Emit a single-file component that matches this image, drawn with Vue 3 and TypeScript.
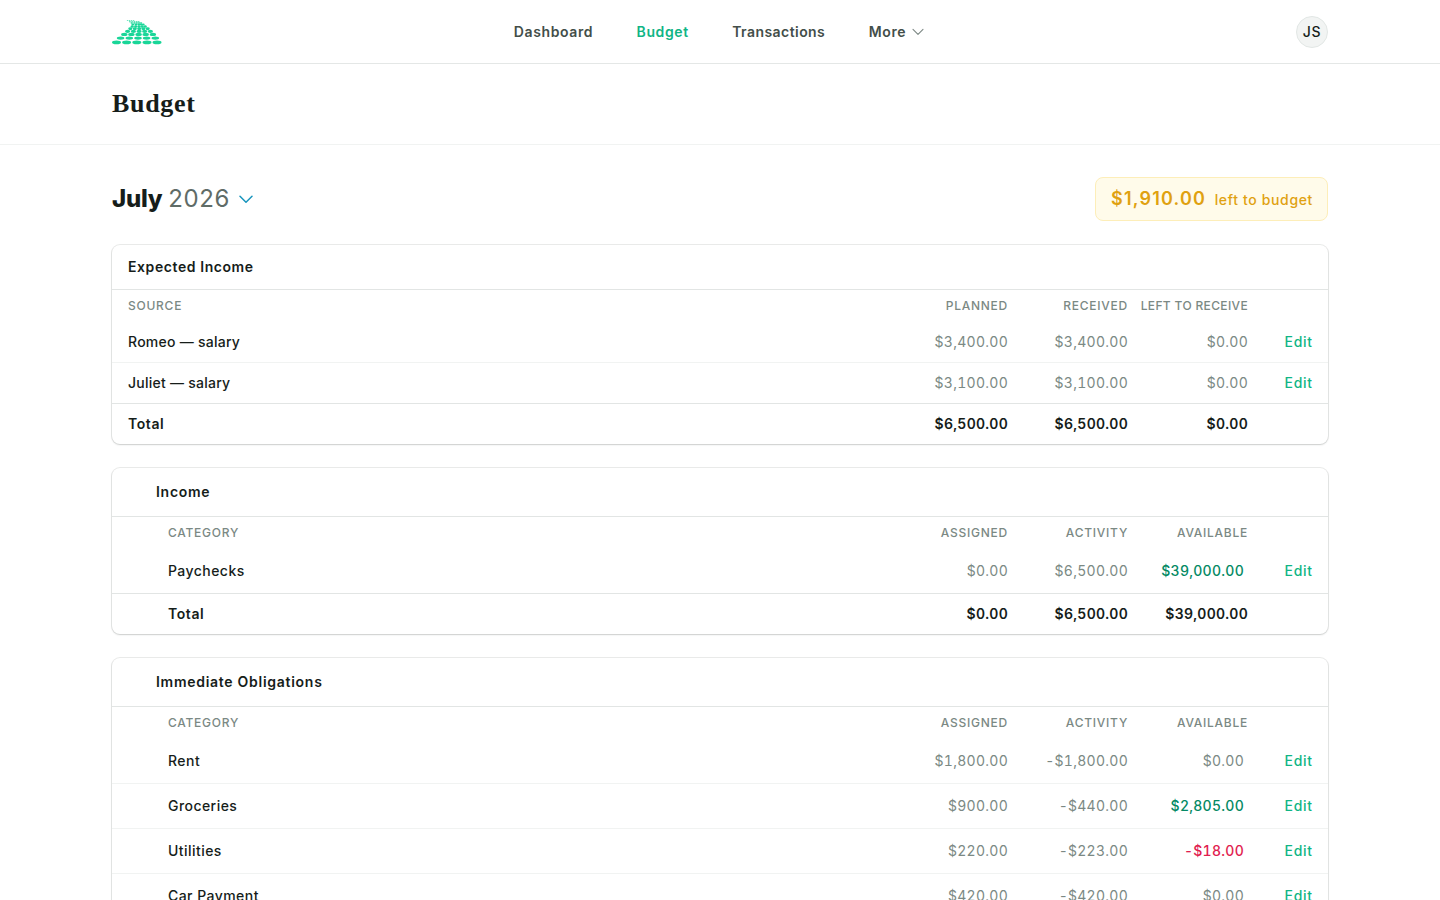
<script setup lang="ts">
interface Row {
  name: string
  values: string[]
  tone?: 'pos' | 'neg'
}
interface Group {
  title: string
  kind: 'income' | 'budget'
  columns: string[]
  rows: Row[]
  total?: string[]
}

const groups: Group[] = [
  {
    title: 'Expected Income',
    kind: 'income',
    columns: ['Source', 'Planned', 'Received', 'Left to receive'],
    rows: [
      { name: 'Romeo — salary', values: ['$3,400.00', '$3,400.00', '$0.00'] },
      { name: 'Juliet — salary', values: ['$3,100.00', '$3,100.00', '$0.00'] },
    ],
    total: ['$6,500.00', '$6,500.00', '$0.00'],
  },
  {
    title: 'Income',
    kind: 'budget',
    columns: ['Category', 'Assigned', 'Activity', 'Available'],
    rows: [{ name: 'Paychecks', values: ['$0.00', '$6,500.00', '$39,000.00'], tone: 'pos' }],
    total: ['$0.00', '$6,500.00', '$39,000.00'],
  },
  {
    title: 'Immediate Obligations',
    kind: 'budget',
    columns: ['Category', 'Assigned', 'Activity', 'Available'],
    rows: [
      { name: 'Rent', values: ['$1,800.00', '-$1,800.00', '$0.00'] },
      { name: 'Groceries', values: ['$900.00', '-$440.00', '$2,805.00'], tone: 'pos' },
      { name: 'Utilities', values: ['$220.00', '-$223.00', '-$18.00'], tone: 'neg' },
      { name: 'Car Payment', values: ['$420.00', '-$420.00', '$0.00'] },
    ],
  },
]

// Each logo row: vertical centre, ellipse radii, horizontal centres
const logoRows: { y: number; rx: number; ry: number; xs: number[] }[] = [
  { y: 22.4, rx: 4.5, ry: 1.8, xs: [4.5, 14.6, 24.8, 35, 45] },
  { y: 18.1, rx: 3.8, ry: 1.7, xs: [8.6, 17.3, 26, 34.6, 43.3] },
  { y: 14.4, rx: 3.2, ry: 1.7, xs: [12.3, 19.4, 26.6, 33.7, 40.9] },
  { y: 11.3, rx: 2.6, ry: 1.6, xs: [15.6, 21.4, 27.1, 32.7, 38.4] },
  { y: 8.7, rx: 2.05, ry: 1.45, xs: [18.3, 22.8, 27.2, 31.4, 35.7] },
  { y: 6.4, rx: 1.6, ry: 1.25, xs: [20.2, 23.7, 27, 30.1, 33.2] },
  { y: 4.5, rx: 1.4, ry: 1, xs: [20.8, 23.9, 26.7, 29.2, 31.3] },
  { y: 2.9, rx: 1.2, ry: 0.75, xs: [19.7, 22.4, 24.8, 27.1, 29.1] },
  { y: 1.7, rx: 1, ry: 0.55, xs: [17.9, 20.1, 22.4, 24.6, 26.6] },
  { y: 0.7, rx: 0.9, ry: 0.4, xs: [15.6, 17.6, 19.6, 21.6] },
]
</script>

<template>
  <div class="page">
    <nav class="nav">
      <div class="wrap nav-inner">
        <svg class="logo" width="50" height="25" viewBox="0 0 50 25" fill="#19d698">
          <template v-for="r in logoRows" :key="r.y">
            <ellipse v-for="x in r.xs" :key="x" :cx="x" :cy="r.y" :rx="r.rx" :ry="r.ry" />
          </template>
        </svg>
        <div class="links">
          <a class="l1">Dashboard</a>
          <a class="l2 active">Budget</a>
          <a class="l3">Transactions</a>
          <a class="l4">More</a>
          <svg width="12" height="8" viewBox="0 0 12 8" fill="none" stroke="#7d8985" stroke-width="1.1" stroke-linecap="round" stroke-linejoin="round"><path d="M1 1.3 6 6.3 11 1.3" /></svg>
        </div>
        <div class="avatar">JS</div>
      </div>
    </nav>

    <header class="head">
      <div class="wrap"><h1>Budget</h1></div>
    </header>

    <main class="wrap main">
      <div class="bar">
        <div class="month">
          <strong>July</strong><span>2026</span>
          <svg width="14" height="9" viewBox="0 0 14 9" fill="none" stroke="#1995bd" stroke-width="1.5" stroke-linecap="round" stroke-linejoin="round"><path d="M1 1.3 7 7.3 13 1.3" /></svg>
        </div>
        <div class="left"><b>$1,910.00</b><span>left to budget</span></div>
      </div>

      <section v-for="g in groups" :key="g.title" class="card" :class="[g.kind, { totalled: g.total }]">
        <h2>{{ g.title }}</h2>
        <div class="row cols">
          <span v-for="c in g.columns" :key="c" :class="{ tight: c.length > 10 }">{{ c }}</span>
        </div>
        <div v-for="r in g.rows" :key="r.name" class="row item">
          <span class="name">{{ r.name }}</span>
          <span v-for="(v, i) in r.values" :key="i" class="money" :class="i === 2 ? ['last', r.tone] : []">{{ v }}</span>
          <a class="edit">Edit</a>
        </div>
        <div v-if="g.total" class="row total">
          <span class="name">Total</span>
          <span v-for="(v, i) in g.total" :key="i" class="money">{{ v }}</span>
        </div>
      </section>
    </main>
  </div>
</template>

<style>
html, body { background: #fff; overflow: hidden; }
</style>

<style scoped>
* { box-sizing: border-box; }
.page {
  height: 100vh;
  overflow: hidden;
  font: 500 14px/20px Inter, "Liberation Sans", sans-serif;
  color: #161d1a;
}
.wrap { width: 1216px; margin: 0 auto; }
.nav { height: 64px; border-bottom: 1px solid #e4e7e6; }
.nav-inner {
  height: 63px;
  display: grid;
  grid-template-columns: 1fr auto 1fr;
  align-items: center;
}
.logo { display: block; margin-top: 1px; }
.links {
  display: flex;
  align-items: center;
  margin-right: 2px;
  font-weight: 600;
  color: #434e49;
}
.links a { margin-right: 43.5px; white-space: nowrap; letter-spacing: 0.6px; }
.links .active { color: #10b585; }
.links .l3 { letter-spacing: 0.44px; }
.links .l4 { margin-right: 6px; }
.avatar {
  justify-self: end;
  width: 32px;
  height: 32px;
  border-radius: 50%;
  border: 1px solid #e2e7e5;
  background: #f2f4f3;
  letter-spacing: 0.6px;
  line-height: 30px;
  text-align: center;
}
.head { height: 81px; border-bottom: 1px solid #f1f3f2; }
h1 {
  margin: 0;
  padding-top: 24px;
  font: 700 26px/32px "Liberation Serif", serif;
  letter-spacing: 0.7px;
}
.main { padding-top: 32px; }
.bar { display: flex; justify-content: space-between; align-items: center; height: 44px; margin-bottom: 24px; }
.month { display: flex; align-items: center; font-size: 24px; line-height: 32px; }
.month strong { font-weight: 800; margin-right: 6px; letter-spacing: -0.25px; }
.month span { font-weight: 400; color: #5f6c67; margin-right: 8.5px; letter-spacing: 0.6px; }
.left {
  width: 233px;
  height: 44px;
  padding: 0 14px 0 15px;
  display: flex;
  align-items: center;
  justify-content: space-between;
  border: 1px solid #fdeeb9;
  border-radius: 8px;
  background: #fffbea;
  color: #e0a110;
  white-space: nowrap;
}
.left b { font-size: 18px; font-weight: 600; letter-spacing: 1.2px; }
.left span { padding-top: 2px; letter-spacing: 0.65px; }
.card {
  margin-bottom: 24px;
  border-radius: 8px;
  background: #fff;
  box-shadow: 0 0 0 1px rgba(22, 29, 26, 0.09), 0 1px 2px rgba(22, 29, 26, 0.14);
}
h2 {
  margin: 0;
  padding: 0 16px;
  height: 45px;
  line-height: 44px;
  font-size: 14px;
  font-weight: 600;
  letter-spacing: 0.58px;
  border-bottom: 1px solid #e2e5e4;
}
.budget h2 { height: 49px; line-height: 48px; padding-left: 44px; letter-spacing: 0.72px; }
.row {
  display: grid;
  grid-template-columns: 1fr 120px 120px 120px 64px;
  align-items: center;
  height: 41px;
  padding: 0 16px;
  text-align: right;
  border-bottom: 1px solid #f1f3f2;
}
.budget .row { padding-left: 56px; }
.budget .item { height: 45px; }
.row > :first-child { text-align: left; }
.name { letter-spacing: 0.25px; }
.budget .name { letter-spacing: 0.45px; }
.cols,
.budget .cols {
  height: 32px;
  border: 0;
  font-size: 12px;
  text-transform: uppercase;
  letter-spacing: 0.75px;
  color: #7b8984;
  white-space: nowrap;
}
.cols .tight { letter-spacing: 0.35px; }
.money { font-weight: 400; color: #7b8984; font-variant-numeric: tabular-nums; letter-spacing: 0.27px; }
.budget .last { padding-right: 4px; }
.money.pos { color: #048a64; font-weight: 500; }
.money.neg { color: #e11d50; font-weight: 500; }
.edit { color: #10b585; letter-spacing: 0.65px; margin-right: -0.6px; }
.totalled .item:nth-last-child(2) { border-color: #e2e5e4; }
.total { height: 40px; border: 0; font-weight: 600; }
.total .name { letter-spacing: 0.6px; }
.total .money { font-weight: 600; color: #161d1a; }
</style>
